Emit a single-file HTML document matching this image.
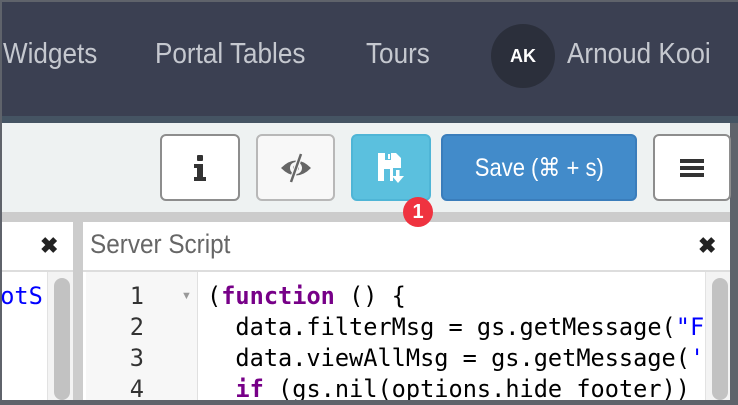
<!DOCTYPE html>
<html><head><style>
*{margin:0;padding:0;box-sizing:border-box}
body{width:738px;height:400px;overflow:hidden;background:#5f636b;font-family:"Liberation Sans",sans-serif;position:relative}
.abs{position:absolute}
.nav{left:2px;top:2px;width:736px;height:114px;background:#3b4052}
.strip{left:2px;top:116px;width:736px;height:7px;background:#455463}
.tool{left:2px;top:123px;width:728px;height:89px;background:#eef2f2}
.gap{left:2px;top:212px;width:728px;height:188px;background:#cccccc}
.navt{color:#c5c8cf;font-size:29px;top:38px;white-space:nowrap;transform:scaleX(0.9);transform-origin:left center}
.btn{top:134px;height:67px;border-radius:6px;border:2px solid #8d8d8d;background:#fff;display:flex;align-items:center;justify-content:center}
.code{font-family:"DejaVu Sans Mono","Liberation Mono",monospace;font-size:23.6px;color:#000;white-space:pre;line-height:31px}
</style></head><body>
<div class="abs nav"></div>
<div class="abs strip"></div>
<div class="abs tool"></div>
<div class="abs gap"></div>
<div class="abs navt" style="left:3px">Widgets</div>
<div class="abs navt" style="left:155px">Portal Tables</div>
<div class="abs navt" style="left:366px">Tours</div>
<div class="abs" style="left:491px;top:24px;width:64px;height:64px;border-radius:50%;background:#2b2f3b;color:#fff;font-weight:bold;font-size:18px;display:flex;align-items:center;justify-content:center">AK</div>
<div class="abs navt" style="left:567px">Arnoud Kooi</div>

<div class="abs btn" style="left:160px;width:80px">
<svg width="14" height="26" viewBox="0 0 14 26"><rect x="4" y="0" width="6" height="6" rx="1" fill="#333"/><path d="M1 9 H10 V22 H13 V26 H1 V22 H4 V13 H1Z" fill="#333"/></svg></div>
<div class="abs btn" style="left:256px;width:79px;border-color:#b8b8b8;background:#f8f8f8">
<svg width="34" height="32" viewBox="0 0 34 32"><path d="M2 16 Q17 1 32 16 Q17 31 2 16Z" fill="#666"/><circle cx="17" cy="16" r="6" fill="#f8f8f8"/><circle cx="17" cy="16" r="3" fill="#666"/><path d="M22 1 L12 31" stroke="#f8f8f8" stroke-width="5"/><path d="M22 2 L12 30" stroke="#666" stroke-width="2.5"/></svg></div>
<div class="abs btn" style="left:351px;width:80px;background:#5bc0de;border-color:#4fb5d6">
<svg width="30" height="34" viewBox="0 0 30 34"><path d="M2 2 H20 L25 7 V17 H17 V30 H2Z" fill="#fff"/><rect x="9" y="2" width="6" height="7" fill="#5bc0de"/><rect x="12" y="3" width="2" height="5" fill="#fff"/><rect x="8" y="18" width="6" height="12" fill="#5bc0de"/><rect x="20" y="19" width="3.5" height="8" fill="#fff"/><path d="M16 25 H28 L22 32Z" fill="#fff"/></svg></div>
<div class="abs btn" style="left:441px;width:196px;background:#428bca;border-color:#3a7dbb;color:#fff;font-size:25px"><span style="display:inline-block;transform:scaleX(0.88);white-space:nowrap">Save (⌘ + s)</span></div>
<div class="abs btn" style="left:653px;width:78px"><svg width="24" height="20"><rect y="1" width="24" height="4" fill="#333"/><rect y="8" width="24" height="4" fill="#333"/><rect y="15" width="24" height="4" fill="#333"/></svg></div>

<!-- left panel -->
<div class="abs" style="left:2px;top:222px;width:71px;height:178px;background:#fff"></div>
<div class="abs" style="left:40px;top:233px;font-size:22px;font-weight:bold;color:#222">✖</div>
<div class="abs" style="left:2px;top:270px;width:71px;height:2px;background:#ddd"></div>
<div class="abs code" style="left:-14px;top:281px;color:#00f;width:61px;overflow:hidden">ootS</div>
<div class="abs" style="left:47px;top:272px;width:26px;height:128px;background:#f3f3f3;border-left:1px solid #e2e2e2"></div>
<div class="abs" style="left:54px;top:278px;width:16px;height:122px;background:#c2c2c2;border-radius:8px"></div>

<!-- right panel -->
<div class="abs" style="left:83px;top:222px;width:647px;height:178px;background:#fff"></div>
<div class="abs" style="left:90px;top:229px;font-size:27px;color:#666;transform:scaleX(0.9);transform-origin:left center;white-space:nowrap">Server Script</div>
<div class="abs" style="left:698px;top:233px;font-size:22px;font-weight:bold;color:#222">✖</div>
<div class="abs" style="left:83px;top:270px;width:647px;height:2px;background:#ddd"></div>
<div class="abs" style="left:86px;top:272px;width:112px;height:128px;background:#f7f7f7;border-right:1px solid #e0e0e0"></div>
<div class="abs code" style="left:100px;top:281px;width:44px;text-align:right;color:#333">1
2
3
4</div>
<div class="abs" style="left:181px;top:290px;font-size:11px;color:#999">▼</div>
<div class="abs" style="left:200px;top:272px;width:503px;height:128px;overflow:hidden"><div class="code" style="padding:9px 0 0 7px">(<b style="color:#708">function</b> () {
  data.filterMsg = gs.getMessage(<span style="color:#00f">"F</span>
  data.viewAllMsg = gs.getMessage(<span style="color:#00f">'</span>
  <b style="color:#708">if</b> (gs.nil(options.hide_footer))</div></div>
<div class="abs" style="left:705px;top:272px;width:25px;height:128px;background:#f3f3f3;border-left:1px solid #e2e2e2"></div>
<div class="abs" style="left:712px;top:278px;width:16px;height:122px;background:#c2c2c2;border-radius:8px"></div>

<div class="abs" style="left:403px;top:197px;width:30px;height:30px;border-radius:50%;background:#ef3340;color:#fff;font-weight:bold;font-size:20px;display:flex;align-items:center;justify-content:center">1</div>
</body></html>
